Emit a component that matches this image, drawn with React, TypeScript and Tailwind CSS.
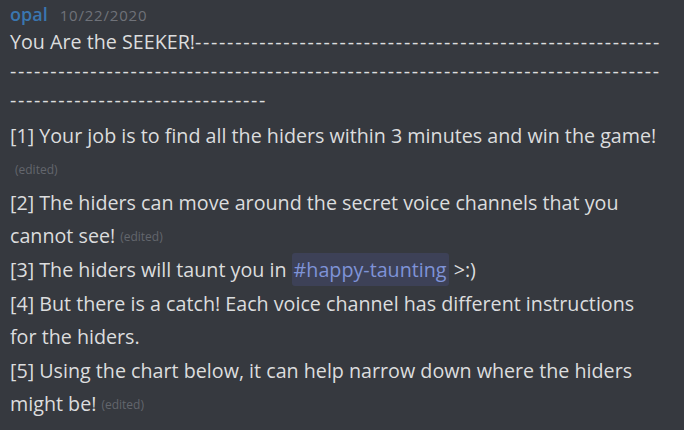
import React from "react";

const Edited = () => (
	<span className="text-[12px] leading-none text-[#63666d] ml-[5px] align-middle">(edited)</span>
);

const dashes = (n: number) => "-".repeat(n);

const App: React.FC = () => {
	return (
		<div
			className="w-[684px] h-[430px] bg-[#36393f] text-[#dcddde] overflow-hidden pl-[10px] pr-[20px] pt-[1px]"
			style={{ fontFamily: '"Open Sans", "Noto Sans", sans-serif' }}>
			<div className="flex items-baseline gap-[12px] h-[26px]">
				<span className="text-[18px] font-semibold text-[#3a76b0]">opal</span>
				<span className="text-[15px] tracking-[0.8px] text-[#6f7279]">10/22/2020</span>
			</div>
			<div className="text-[19.7px] leading-[29px] break-all">
				You Are the SEEKER!
				<span className="tracking-[1.7px]">{dashes(171)}</span>
			</div>
			<div className="mt-[6px] text-[19.7px] leading-[32.7px]">
				<div className="mb-[1.5px]">
					[1] Your job is to find all the hiders within 3 minutes and win the game! <Edited />
				</div>
				<div className="mb-[1.5px]">
					[2] The hiders can move around the secret voice channels that you cannot see!
					<Edited />
				</div>
				<div className="mb-[1.5px]">
					[3] The hiders will taunt you in{" "}
					<span className="bg-[#3d4157] text-[#7f93d8] rounded-[3px] px-[2px] py-[3px]">
						#happy-taunting
					</span>{" "}
					&gt;:)
				</div>
				<div className="mb-[1.5px]">
					[4] But there is a catch! Each voice channel has different instructions for the
					hiders.
				</div>
				<div>
					[5] Using the chart below, it can help narrow down where the hiders might be!
					<Edited />
				</div>
			</div>
		</div>
	);
};

export default App;
